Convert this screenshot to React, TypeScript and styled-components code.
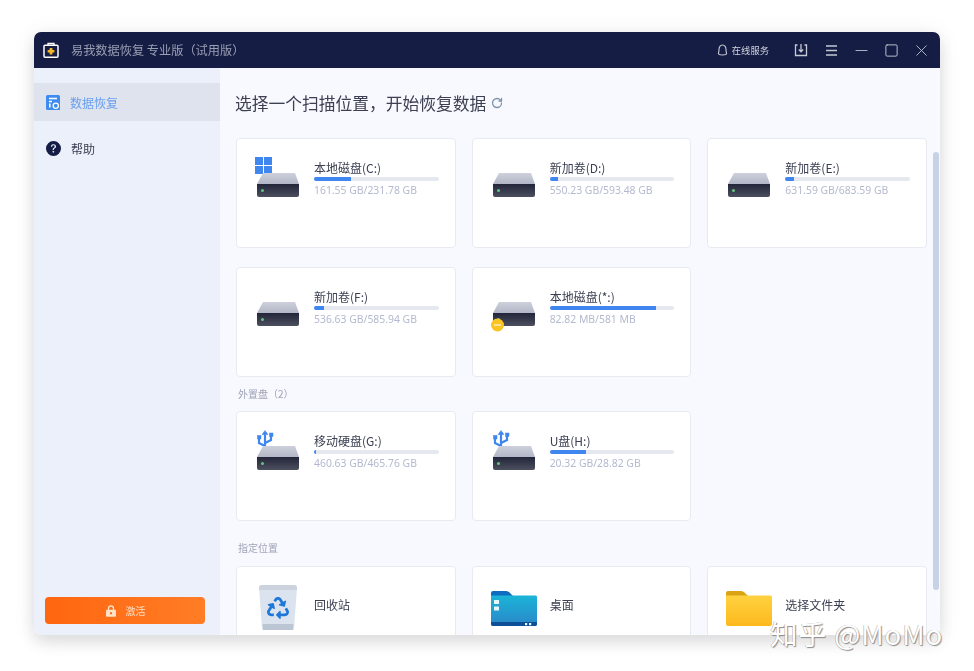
import React from 'react';
import styled, { createGlobalStyle } from 'styled-components';
import { Minus, RotateCw, Square, X } from 'lucide-react';
import { BsQuestionCircleFill } from 'react-icons/bs';
import { FaRecycle } from 'react-icons/fa';

const GlobalStyle = createGlobalStyle`
  html, body { margin: 0; padding: 0; background: #fff; }
  body { font-family: "Noto Sans CJK SC", "Noto Sans", sans-serif; }
  * { box-sizing: border-box; }
`;

const Page = styled.div`
  position: relative;
  width: 974px;
  height: 671px;
  padding: 32px 34px 36px;
  overflow: hidden;
`;

const Window = styled.div`
  height: 603px;
  display: flex;
  flex-direction: column;
  border-radius: 7px;
  overflow: hidden;
  filter: blur(0.3px);
  box-shadow: 0 7px 16px rgba(60, 60, 70, 0.15), 0 2px 24px rgba(60, 60, 70, 0.07);
`;

const TitleBar = styled.div`
  flex: 0 0 36px;
  display: flex;
  align-items: center;
  padding: 0 4px 0 9px;
  background: #151d45;
`;

const AppTitle = styled.span`
  margin-left: 12px;
  font-size: 12.2px;
  color: #9a9fb3;
  white-space: nowrap;
`;

const TitleRight = styled.div`
  margin-left: auto;
  display: flex;
  align-items: center;
  color: #c4c7d4;
`;

const Service = styled.span`
  display: flex;
  align-items: center;
  gap: 4px;
  margin-right: 17px;
  font-size: 9.3px;
  color: #d0d3de;
`;

const TitleButton = styled.span`
  width: 30px;
  display: flex;
  justify-content: center;
  align-items: center;
`;

const Body = styled.div`
  flex: 1;
  display: flex;
  min-height: 0;
`;

const Sidebar = styled.nav`
  flex: 0 0 186px;
  display: flex;
  flex-direction: column;
  padding-top: 15px;
  background: #ecf0fa;
`;

const NavItem = styled.div<{ $active?: boolean }>`
  height: 38px;
  display: flex;
  align-items: center;
  gap: 10px;
  padding-left: 12px;
  margin-bottom: 8px;
  font-size: 12px;
  color: ${(p) => (p.$active ? '#69a0ee' : '#3a3e50')};
  background: ${(p) => (p.$active ? '#dfe3ee' : 'transparent')};
`;

const ActivateButton = styled.button`
  margin: auto 15px 11px 11px;
  height: 27px;
  display: flex;
  justify-content: center;
  align-items: center;
  gap: 9px;
  border: 0;
  border-radius: 4px;
  font-family: inherit;
  font-size: 10px;
  color: #ffdcc2;
  background: linear-gradient(90deg, #ff660f, #ff7d26);
`;

const Main = styled.main`
  position: relative;
  flex: 1;
  padding: 23px 13px 0 16px;
  overflow: hidden;
  background: #f8f9fe;
`;

const Heading = styled.h1`
  display: flex;
  align-items: center;
  gap: 5px;
  height: 24px;
  margin: 0 0 23px -1px;
  font-size: 16.75px;
  font-weight: 400;
  white-space: nowrap;
  color: #3c4052;
`;

const CardGrid = styled.div`
  display: grid;
  grid-template-columns: repeat(3, 1fr);
  gap: 19px 16px;
`;

const Card = styled.div<{ $place?: boolean }>`
  height: 110px;
  display: flex;
  gap: 8px;
  padding: ${(p) => (p.$place ? '13px' : '9px')} 13px 0;
  background: #fff;
  border: 1px solid #e8eaf1;
  border-radius: 4px;
`;

const Info = styled.div`
  flex: 1;
  padding-top: 12px;
  padding-right: 3px;
`;

const Name = styled.div`
  height: 15px;
  font-size: 12px;
  line-height: 15px;
  white-space: nowrap;
  color: #3c4052;
`;

const PlaceName = styled.div`
  margin-top: 16px;
  font-size: 12px;
  line-height: 18px;
  color: #3c4052;
`;

const Track = styled.div`
  height: 4px;
  margin-top: 2px;
  border-radius: 2px;
  overflow: hidden;
  background: #e5e8ef;
`;

const Fill = styled.div`
  height: 100%;
  background: #3f87ee;
`;

const Usage = styled.div`
  margin-top: 2px;
  font-family: "Noto Sans", sans-serif;
  font-size: 10.4px;
  line-height: 14px;
  white-space: nowrap;
  color: #b4b9cf;
`;

const GroupLabel = styled.div<{ $top: number; $bottom: number }>`
  margin: ${(p) => p.$top}px 0 ${(p) => p.$bottom}px 2px;
  font-size: 10px;
  line-height: 14px;
  color: #9ea3b6;
`;

const Scrollbar = styled.div`
  position: absolute;
  top: 84px;
  right: 1px;
  width: 6px;
  height: 438px;
  border-radius: 3px;
  background: #c7d2e7;
`;

const Watermark = styled.div`
  position: absolute;
  left: 770px;
  top: 618px;
  font-size: 27.5px;
  line-height: 30px;
  letter-spacing: 1px;
  white-space: nowrap;
  color: #fff;
  text-shadow: 1px 1px 1px #8a8a8a, -0.5px 0 0 #aaa;
`;

const KitIcon = () => (
  <svg width="16" height="16" viewBox="0 0 16 16">
    <path d="M5 3V1.5h6V3" fill="none" stroke="#fff" strokeWidth="1.3" />
    <rect x="1" y="3.2" width="14" height="12" rx="1" fill="none" stroke="#fff" strokeWidth="1.5" />
    <path d="M6.6 6h2.8v2h2v2.6h-2v2H6.6v-2h-2V8h2z" fill="#f5b921" />
  </svg>
);

const RecoveryIcon = () => (
  <svg width="14" height="15" viewBox="0 0 14 15">
    <path d="M1.5 0h11A1.5 1.5 0 0 1 14 1.5V15H1.5A1.5 1.5 0 0 1 0 13.5v-12A1.5 1.5 0 0 1 1.5 0z" fill="#3f8cf0" />
    <path d="M3 3.5h8M3 6.5h3" stroke="#fff" strokeWidth="1.4" />
    <circle cx="9.8" cy="10.8" r="2.6" fill="none" stroke="#fff" strokeWidth="1.3" />
    <rect x="3" y="8.5" width="1.6" height="4" fill="#fff" />
  </svg>
);

const BellIcon = () => (
  <svg width="11" height="12" viewBox="0 0 11 12">
    <path d="M5.5 1C3.2 1 2 3 2 5.5 2 8 1.4 9 1.4 9.6c0 .9 1.8 1.4 4.1 1.4s4.1-.5 4.1-1.4C9.600 9 9 8 9 5.500 9 3 7.800 1 5.500 1z" fill="none" stroke="#c6c9d5" strokeWidth="1.1" />
  </svg>
);

const DownloadIcon = () => (
  <svg width="14" height="14" viewBox="0 0 14 14" fill="none" stroke="#c8cbd7" strokeWidth="1.3">
    <path d="M3.500 2H1.500v10.500h11V2h-2" />
    <path d="M7 1v7.500M4.800 6.500 7 8.800l2.200-2.300" />
  </svg>
);

const MenuIcon = () => (
  <svg width="13" height="11" viewBox="0 0 13 11" stroke="#c4c7d4" strokeWidth="1.3">
    <path d="M1 1h11M1 5.500h11M1 10h11" />
  </svg>
);

const LockIcon = () => (
  <svg width="12" height="12" viewBox="0 0 12 12">
    <path d="M3.500 5V3.500a2.500 2.500 0 0 1 5 0V5" fill="none" stroke="#ffe2c8" strokeWidth="1.3" />
    <rect x="1" y="4.800" width="10" height="7" rx="1" fill="#ffe2c8" />
    <rect x="5" y="7.200" width="2" height="2" fill="#ff6f1a" />
  </svg>
);

type Badge = 'windows' | 'usb' | 'warning';

const DriveIcon = ({ badge }: { badge?: Badge }) => (
  <svg width="56" height="56" viewBox="0 0 56 56">
    <defs>
      <linearGradient id="driveTop" x1="0" y1="0" x2="0" y2="1">
        <stop offset="0" stopColor="#ced1dc" />
        <stop offset="1" stopColor="#b2b6c6" />
      </linearGradient>
      <linearGradient id="driveBase" x1="0" y1="0" x2="0" y2="1">
        <stop offset="0" stopColor="#23263a" />
        <stop offset="1" stopColor="#4c4f5e" />
      </linearGradient>
    </defs>
    {badge === 'windows' && (
      <g fill="#3f87ee">
        <rect x="5" y="9" width="8" height="8" />
        <rect x="14" y="9" width="8" height="8" />
        <rect x="5" y="18" width="8" height="8" />
        <rect x="14" y="18" width="8" height="8" />
      </g>
    )}
    {badge === 'usb' && (
      <g fill="none" stroke="#3f87ee" strokeWidth="2.200">
        <path d="M15 12v18M15 25l-6-3v-5M15 22l6-3v-4" />
        <path d="M15 9.500l-3 4h6z" fill="#3f87ee" strokeWidth="0.500" />
        <rect x="7.500" y="14.500" width="3.500" height="3.500" fill="#3f87ee" strokeWidth="0.500" />
        <rect x="19.500" y="12" width="3.500" height="3.500" fill="#3f87ee" strokeWidth="0.500" />
      </g>
    )}
    <path d="M13 25h32l4 11H7z" fill="url(#driveTop)" />
    <path d="M7 36h42v11a2 2 0 0 1-2 2H9a2 2 0 0 1-2-2z" fill="url(#driveBase)" />
    <circle cx="12.500" cy="42.500" r="1.500" fill="#62c47f" />
    {badge === 'warning' && (
      <g>
        <circle cx="11.500" cy="48" r="6.500" fill="#fbc420" />
        <rect x="8" y="47.300" width="7" height="1.400" fill="#fff3c4" />
      </g>
    )}
  </svg>
);

const BinIcon = () => (
  <svg width="56" height="56" viewBox="0 0 56 56">
    <path d="M9 8a3 3 0 0 1 3-3h32a3 3 0 0 1 3 3l-3 40a2 2 0 0 1-2 2H14a2 2 0 0 1-2-2z" fill="#dbe3ee" />
    <path d="M9 8a3 3 0 0 1 3-3h32a3 3 0 0 1 3 3v2H9z" fill="#ccd3df" />
    <path d="M12.500 44h31l-.5 6H13z" fill="#bcc5d3" />
    <FaRecycle x="17" y="17" size={22} color="#1f78d8" />
  </svg>
);

const FolderIcon = ({ variant }: { variant: 'desktop' | 'yellow' }) => {
  const desktop = variant === 'desktop';
  const id = `${variant}Folder`;
  return (
    <svg width="56" height="56" viewBox="0 0 56 56">
      <defs>
        <linearGradient id={id} x1="0" y1="0" x2="0" y2="1">
          <stop offset="0" stopColor={desktop ? '#1bb4d8' : '#ffd23f'} />
          <stop offset="1" stopColor={desktop ? '#2a86c8' : '#fdb91e'} />
        </linearGradient>
      </defs>
      <path d="M5 13a2 2 0 0 1 2-2h13c2 0 3 1 4 2l3 3v6H5z" fill={desktop ? '#0f6cc0' : '#d9a313'} />
      <path d="M5 15.500h44.500A1.500 1.500 0 0 1 51 17v27a2 2 0 0 1-2 2H7a2 2 0 0 1-2-2z" fill={`url(#${id})`} />
      {desktop && (
        <g>
          <path d="M5 42h46v2a2 2 0 0 1-2 2H7a2 2 0 0 1-2-2z" fill="#0f4f98" />
          <rect x="8" y="20" width="5" height="4" fill="#e4f5fb" />
          <rect x="8" y="26.500" width="5" height="4" fill="#e4f5fb" />
          <rect x="39" y="43" width="2.200" height="2.200" fill="#dff" />
          <rect x="43" y="43" width="2.200" height="2.200" fill="#dff" />
        </g>
      )}
    </svg>
  );
};

interface Drive {
  name: string;
  usage: string;
  percent: number;
  badge?: Badge;
}

const localDrives: Drive[] = [
  { name: '本地磁盘(C:)', usage: '161.55 GB/231.78 GB', percent: 30, badge: 'windows' },
  { name: '新加卷(D:)', usage: '550.23 GB/593.48 GB', percent: 7 },
  { name: '新加卷(E:)', usage: '631.59 GB/683.59 GB', percent: 7 },
  { name: '新加卷(F:)', usage: '536.63 GB/585.94 GB', percent: 8 },
  { name: '本地磁盘(*:)', usage: '82.82 MB/581 MB', percent: 85, badge: 'warning' },
];

const externalDrives: Drive[] = [
  { name: '移动硬盘(G:)', usage: '460.63 GB/465.76 GB', percent: 1.500, badge: 'usb' },
  { name: 'U盘(H:)', usage: '20.32 GB/28.82 GB', percent: 29, badge: 'usb' },
];

const DriveCard = ({ drive }: { drive: Drive }) => (
  <Card>
    <DriveIcon badge={drive.badge} />
    <Info>
      <Name>{drive.name}</Name>
      <Track>
        <Fill style={{ width: `${drive.percent}%` }} />
      </Track>
      <Usage>{drive.usage}</Usage>
    </Info>
  </Card>
);

export default function App() {
  return (
    <Page>
      <GlobalStyle />
      <Window>
        <TitleBar>
          <KitIcon />
          <AppTitle>易我数据恢复 专业版（试用版）</AppTitle>
          <TitleRight>
            <Service>
              <BellIcon />
              在线服务
            </Service>
            <TitleButton>
              <DownloadIcon />
            </TitleButton>
            <TitleButton>
              <MenuIcon />
            </TitleButton>
            <TitleButton>
              <Minus size={19} strokeWidth={1.1} />
            </TitleButton>
            <TitleButton>
              <Square size={15} strokeWidth={1.5} />
            </TitleButton>
            <TitleButton>
              <X size={19} strokeWidth={1.1} />
            </TitleButton>
          </TitleRight>
        </TitleBar>
        <Body>
          <Sidebar>
            <NavItem $active>
              <RecoveryIcon />
              数据恢复
            </NavItem>
            <NavItem>
              <BsQuestionCircleFill size={15} color="#151d45" />
              帮助
            </NavItem>
            <ActivateButton>
              <LockIcon />
              激活
            </ActivateButton>
          </Sidebar>
          <Main>
            <Heading>
              选择一个扫描位置，开始恢复数据
              <RotateCw size={12} strokeWidth={2.6} color="#7f93ad" />
            </Heading>
            <CardGrid>
              {localDrives.map((drive) => (
                <DriveCard key={drive.name} drive={drive} />
              ))}
            </CardGrid>
            <GroupLabel $top={10} $bottom={10}>
              外置盘（2）
            </GroupLabel>
            <CardGrid>
              {externalDrives.map((drive) => (
                <DriveCard key={drive.name} drive={drive} />
              ))}
            </CardGrid>
            <GroupLabel $top={20} $bottom={11}>
              指定位置
            </GroupLabel>
            <CardGrid>
              <Card $place>
                <BinIcon />
                <PlaceName>回收站</PlaceName>
              </Card>
              <Card $place>
                <FolderIcon variant="desktop" />
                <PlaceName>桌面</PlaceName>
              </Card>
              <Card $place>
                <FolderIcon variant="yellow" />
                <PlaceName>选择文件夹</PlaceName>
              </Card>
            </CardGrid>
            <Scrollbar />
          </Main>
        </Body>
      </Window>
      <Watermark>知乎 @MoMo</Watermark>
    </Page>
  );
}
